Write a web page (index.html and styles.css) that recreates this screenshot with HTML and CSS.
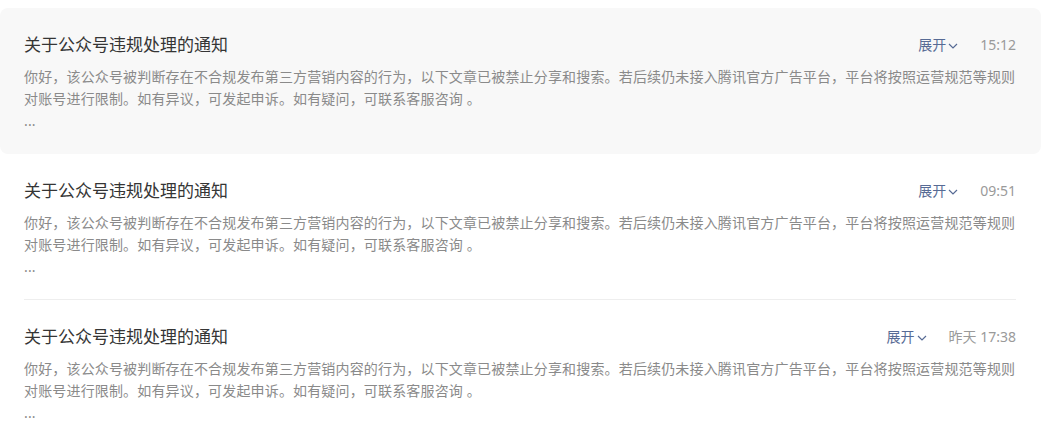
FILE: index.html
```html
<!DOCTYPE html>
<html lang="zh-CN">
<head>
<meta charset="utf-8">
<title>通知</title>
<link rel="stylesheet" href="styles.css">
</head>
<body>
<div class="list">
  <div class="item item-active">
    <div class="inner">
      <div class="head">
        <div class="title">关于公众号违规处理的通知</div>
        <div class="meta">
          <span class="toggle">展开<svg class="chev" width="10" height="6" viewBox="0 0 10 6"><path d="M1 1l4 4 4-4" fill="none" stroke="#576b95" stroke-width="1.2"/></svg></span>
          <span class="time">15:12</span>
        </div>
      </div>
      <div class="body">你好，该公众号被判断存在不合规发布第三方营销内容的行为，以下文章已被禁止分享和搜索。若后续仍未接入腾讯官方广告平台，平台将按照运营规范等规则对账号进行限制。如有异议，可发起申诉。如有疑问，可联系客服咨询 。<br>...</div>
    </div>
  </div>
  <div class="item">
    <div class="inner">
      <div class="head">
        <div class="title">关于公众号违规处理的通知</div>
        <div class="meta">
          <span class="toggle">展开<svg class="chev" width="10" height="6" viewBox="0 0 10 6"><path d="M1 1l4 4 4-4" fill="none" stroke="#576b95" stroke-width="1.2"/></svg></span>
          <span class="time">09:51</span>
        </div>
      </div>
      <div class="body">你好，该公众号被判断存在不合规发布第三方营销内容的行为，以下文章已被禁止分享和搜索。若后续仍未接入腾讯官方广告平台，平台将按照运营规范等规则对账号进行限制。如有异议，可发起申诉。如有疑问，可联系客服咨询 。<br>...</div>
    </div>
  </div>
  <div class="item">
    <div class="inner">
      <div class="head">
        <div class="title">关于公众号违规处理的通知</div>
        <div class="meta">
          <span class="toggle">展开<svg class="chev" width="10" height="6" viewBox="0 0 10 6"><path d="M1 1l4 4 4-4" fill="none" stroke="#576b95" stroke-width="1.2"/></svg></span>
          <span class="time">昨天 17:38</span>
        </div>
      </div>
      <div class="body">你好，该公众号被判断存在不合规发布第三方营销内容的行为，以下文章已被禁止分享和搜索。若后续仍未接入腾讯官方广告平台，平台将按照运营规范等规则对账号进行限制。如有异议，可发起申诉。如有疑问，可联系客服咨询 。<br>...</div>
    </div>
  </div>
</div>
</body>
</html>
```

FILE: styles.css
```css
html, body {
  margin: 0;
  padding: 0;
  background: #fff;
}
body {
  font-family: "Noto Sans", "Noto Sans CJK SC", sans-serif;
  color: #353535;
}
.list {
  width: 1041px;
  padding-top: 8px;
}
.item {
  padding: 0 25px 0 24px;
  border-radius: 8px;
}
.item-active {
  background: #f8f8f8;
}
.inner {
  padding: 24px 0 21px;
  border-bottom: 1px solid #eeeeee;
}
.item-active .inner {
  border-bottom-color: transparent;
}
.head {
  display: flex;
  align-items: center;
  justify-content: space-between;
  height: 26px;
}
.title {
  font-size: 17px;
  line-height: 26px;
  color: #353535;
}
.meta {
  display: flex;
  align-items: center;
  font-size: 14px;
  line-height: 20px;
}
.toggle {
  display: flex;
  align-items: center;
  color: #576b95;
}
.chev {
  margin-left: 2px;
  margin-top: 1px;
}
.time {
  margin-left: 22px;
  color: #9a9a9a;
}
.body {
  margin-top: 8px;
  font-size: 14px;
  line-height: 22px;
  letter-spacing: 0.16px;
  color: #8a8a8a;
}
```
